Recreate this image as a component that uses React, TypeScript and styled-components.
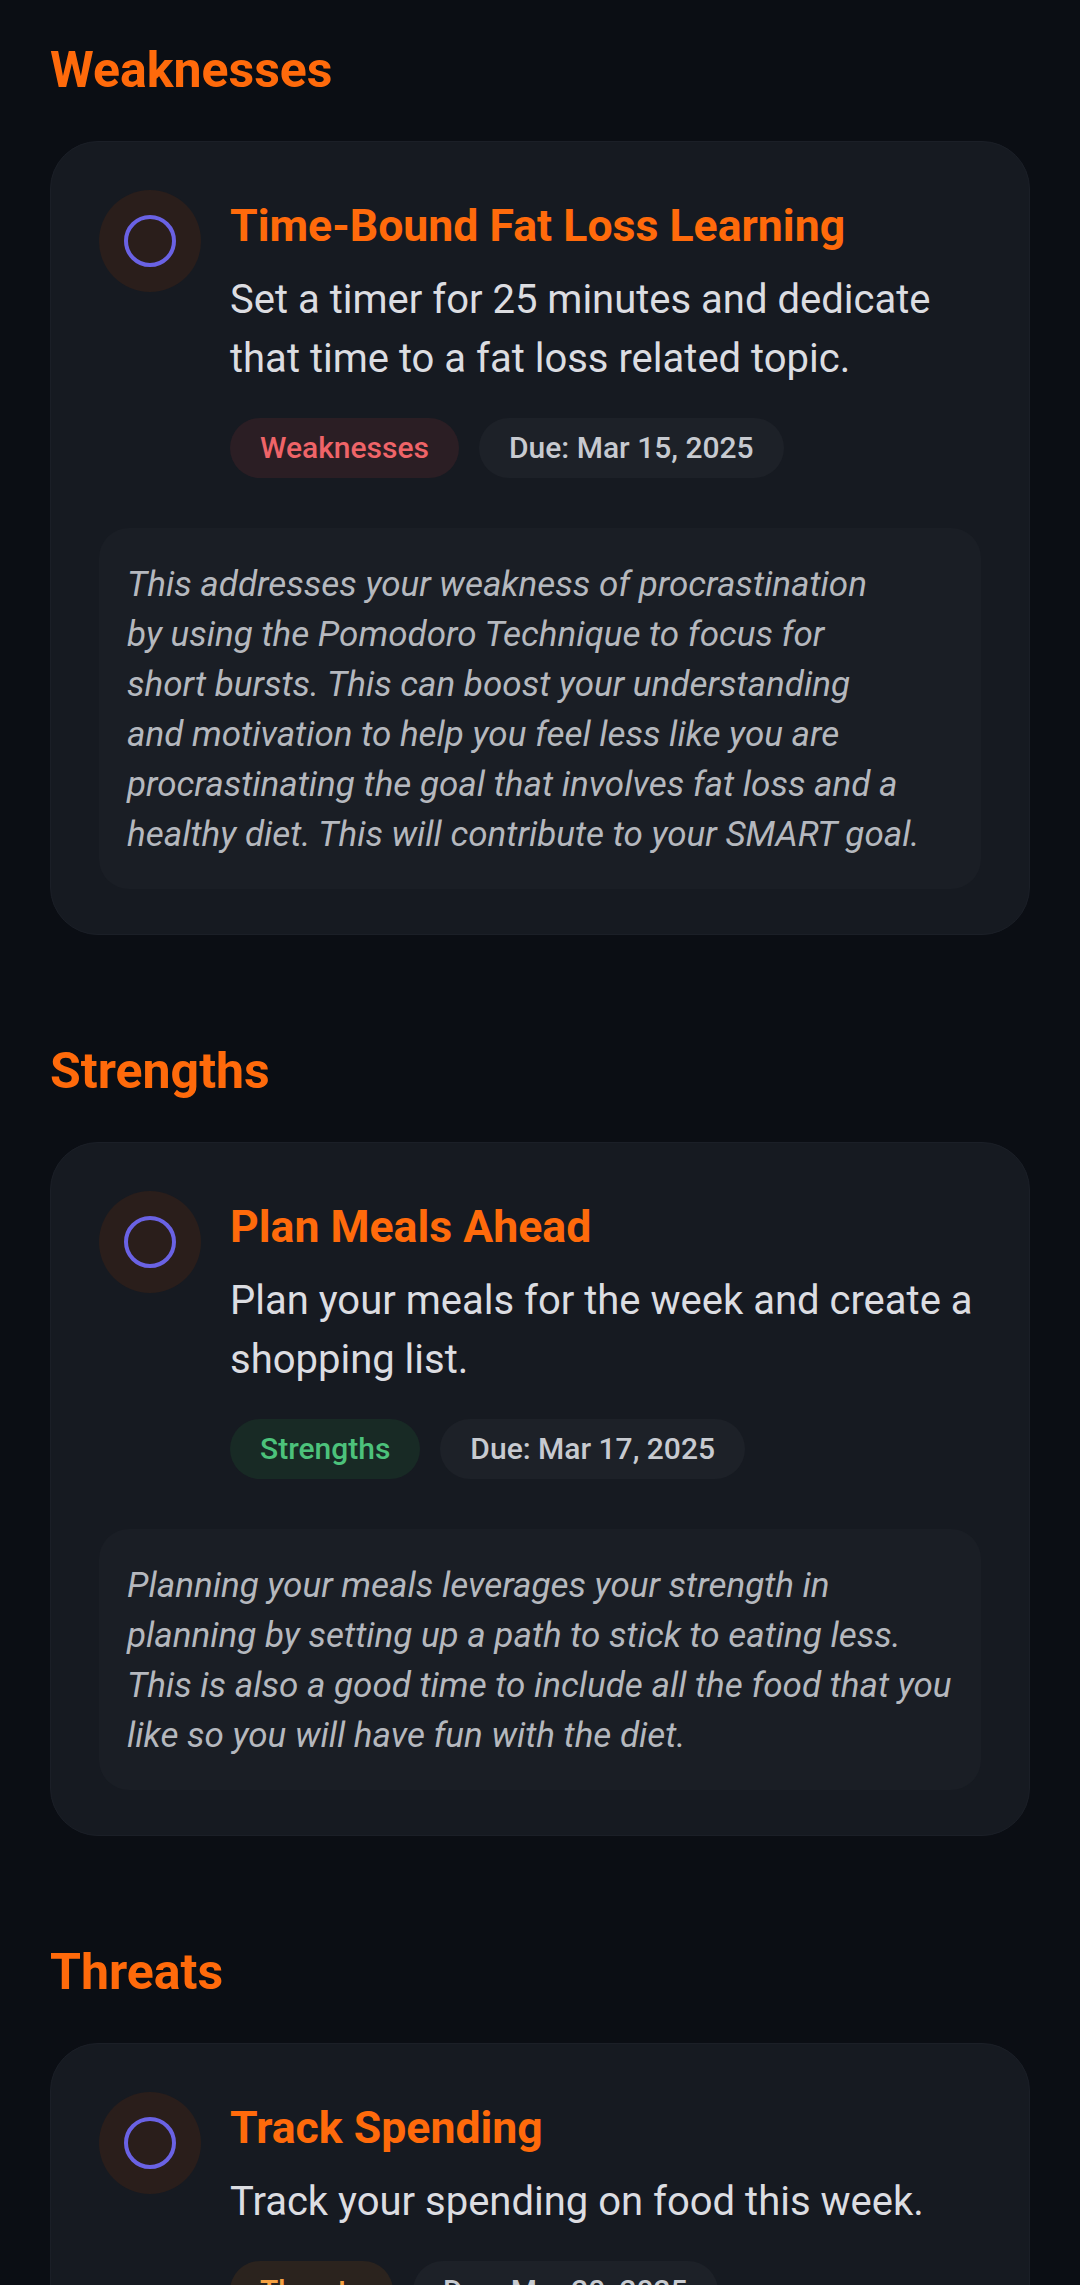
import React from "react";
import styled, { createGlobalStyle } from "styled-components";

const GlobalStyle = createGlobalStyle`
  html, body {
    margin: 0;
    padding: 0;
    background: #0b0e14;
  }
  body {
    font-family: Roboto, "Noto Sans", "Liberation Sans", sans-serif;
    -webkit-font-smoothing: antialiased;
  }
  * { box-sizing: border-box; }
`;

type Kind = "weak" | "strong" | "threat";

const kindColors: Record<Kind, { bg: string; fg: string }> = {
  weak: { bg: "#2b1e24", fg: "#ef6468" },
  strong: { bg: "#182a25", fg: "#4cc27b" },
  threat: { bg: "#2b231e", fg: "#f5a142" },
};

const Page = styled.main`
  display: flex;
  flex-direction: column;
  gap: 106px;
  padding: 40px 50px 60px;
  min-height: 2285px;
  background: #0b0e14;
`;

const Section = styled.section`
  display: flex;
  flex-direction: column;
  gap: 41px;
`;

const SectionTitle = styled.h2`
  margin: 0;
  font-size: 50px;
  line-height: 60px;
  font-weight: 700;
  color: #ff6a0b;
`;

const Card = styled.article`
  display: flex;
  flex-direction: column;
  gap: 50px;
  padding: 48px 48px 45px;
  border: 1px solid #1b1f27;
  border-radius: 48px;
  background: #161a21;
`;

const TaskRow = styled.div`
  display: flex;
  align-items: flex-start;
  gap: 29px;
`;

const CheckHalo = styled.button`
  flex: 0 0 auto;
  display: flex;
  align-items: center;
  justify-content: center;
  width: 102px;
  height: 102px;
  margin: 0;
  padding: 0;
  border: none;
  border-radius: 50%;
  background: #2a1e1b;
  cursor: pointer;
`;

const CheckRing = styled.span`
  display: block;
  width: 52px;
  height: 52px;
  border: 4.5px solid #6a62e4;
  border-radius: 50%;
`;

const TaskBody = styled.div`
  flex: 1 1 auto;
  min-width: 0;
  display: flex;
  flex-direction: column;
  padding-top: 7px;
`;

const TaskTitle = styled.h3`
  margin: 0;
  font-size: 44.6px;
  line-height: 58px;
  font-weight: 700;
  color: #ff6a0b;
`;

const TaskText = styled.p`
  margin: 15px 0 0;
  font-size: 40px;
  line-height: 59px;
  font-weight: 400;
  color: #dcdde1;
`;

const Tags = styled.div`
  display: flex;
  flex-wrap: wrap;
  gap: 20px;
  margin-top: 30px;
`;

const Pill = styled.span<{ $bg: string; $fg: string }>`
  display: inline-flex;
  align-items: center;
  padding: 12px 30px;
  border-radius: 30px;
  font-size: 30px;
  line-height: 36px;
  font-weight: 500;
  background: ${(p) => p.$bg};
  color: ${(p) => p.$fg};
`;

const Reason = styled.div`
  padding: 32px 16px 29px 28px;
  border-radius: 30px;
  background: #1a1e25;
`;

const ReasonText = styled.p`
  margin: 0;
  font-size: 35px;
  line-height: 50px;
  font-style: italic;
  font-weight: 400;
  color: #b5b8be;
`;

const ReasonLine = styled.span`
  display: block;
  white-space: nowrap;
`;

type Task = {
  section: string;
  kind: Kind;
  label: string;
  title: string;
  text: string;
  due: string;
  reason?: string[];
};

const tasks: Task[] = [
  {
    section: "Weaknesses",
    kind: "weak",
    label: "Weaknesses",
    title: "Time-Bound Fat Loss Learning",
    text: "Set a timer for 25 minutes and dedicate that time to a fat loss related topic.",
    due: "Due: Mar 15, 2025",
    reason: [
      "This addresses your weakness of procrastination",
      "by using the Pomodoro Technique to focus for",
      "short bursts. This can boost your understanding",
      "and motivation to help you feel less like you are",
      "procrastinating the goal that involves fat loss and a",
      "healthy diet. This will contribute to your SMART goal.",
    ],
  },
  {
    section: "Strengths",
    kind: "strong",
    label: "Strengths",
    title: "Plan Meals Ahead",
    text: "Plan your meals for the week and create a shopping list.",
    due: "Due: Mar 17, 2025",
    reason: [
      "Planning your meals leverages your strength in",
      "planning by setting up a path to stick to eating less.",
      "This is also a good time to include all the food that you",
      "like so you will have fun with the diet.",
    ],
  },
  {
    section: "Threats",
    kind: "threat",
    label: "Threats",
    title: "Track Spending",
    text: "Track your spending on food this week.",
    due: "Due: Mar 20, 2025",
  },
];

function TaskCard({ task }: { task: Task }) {
  const c = kindColors[task.kind];
  return (
    <Card>
      <TaskRow>
        <CheckHalo aria-label="Mark complete">
          <CheckRing />
        </CheckHalo>
        <TaskBody>
          <TaskTitle>{task.title}</TaskTitle>
          <TaskText>{task.text}</TaskText>
          <Tags>
            <Pill $bg={c.bg} $fg={c.fg}>
              {task.label}
            </Pill>
            <Pill $bg="#1d2128" $fg="#c7cad0">
              {task.due}
            </Pill>
          </Tags>
        </TaskBody>
      </TaskRow>
      {task.reason && (
        <Reason>
          <ReasonText>
            {task.reason.map((line, i) => (
              <ReasonLine key={i}>{line} </ReasonLine>
            ))}
          </ReasonText>
        </Reason>
      )}
    </Card>
  );
}

export default function App() {
  return (
    <>
      <GlobalStyle />
      <Page>
        {tasks.map((t) => (
          <Section key={t.section}>
            <SectionTitle>{t.section}</SectionTitle>
            <TaskCard task={t} />
          </Section>
        ))}
      </Page>
    </>
  );
}
